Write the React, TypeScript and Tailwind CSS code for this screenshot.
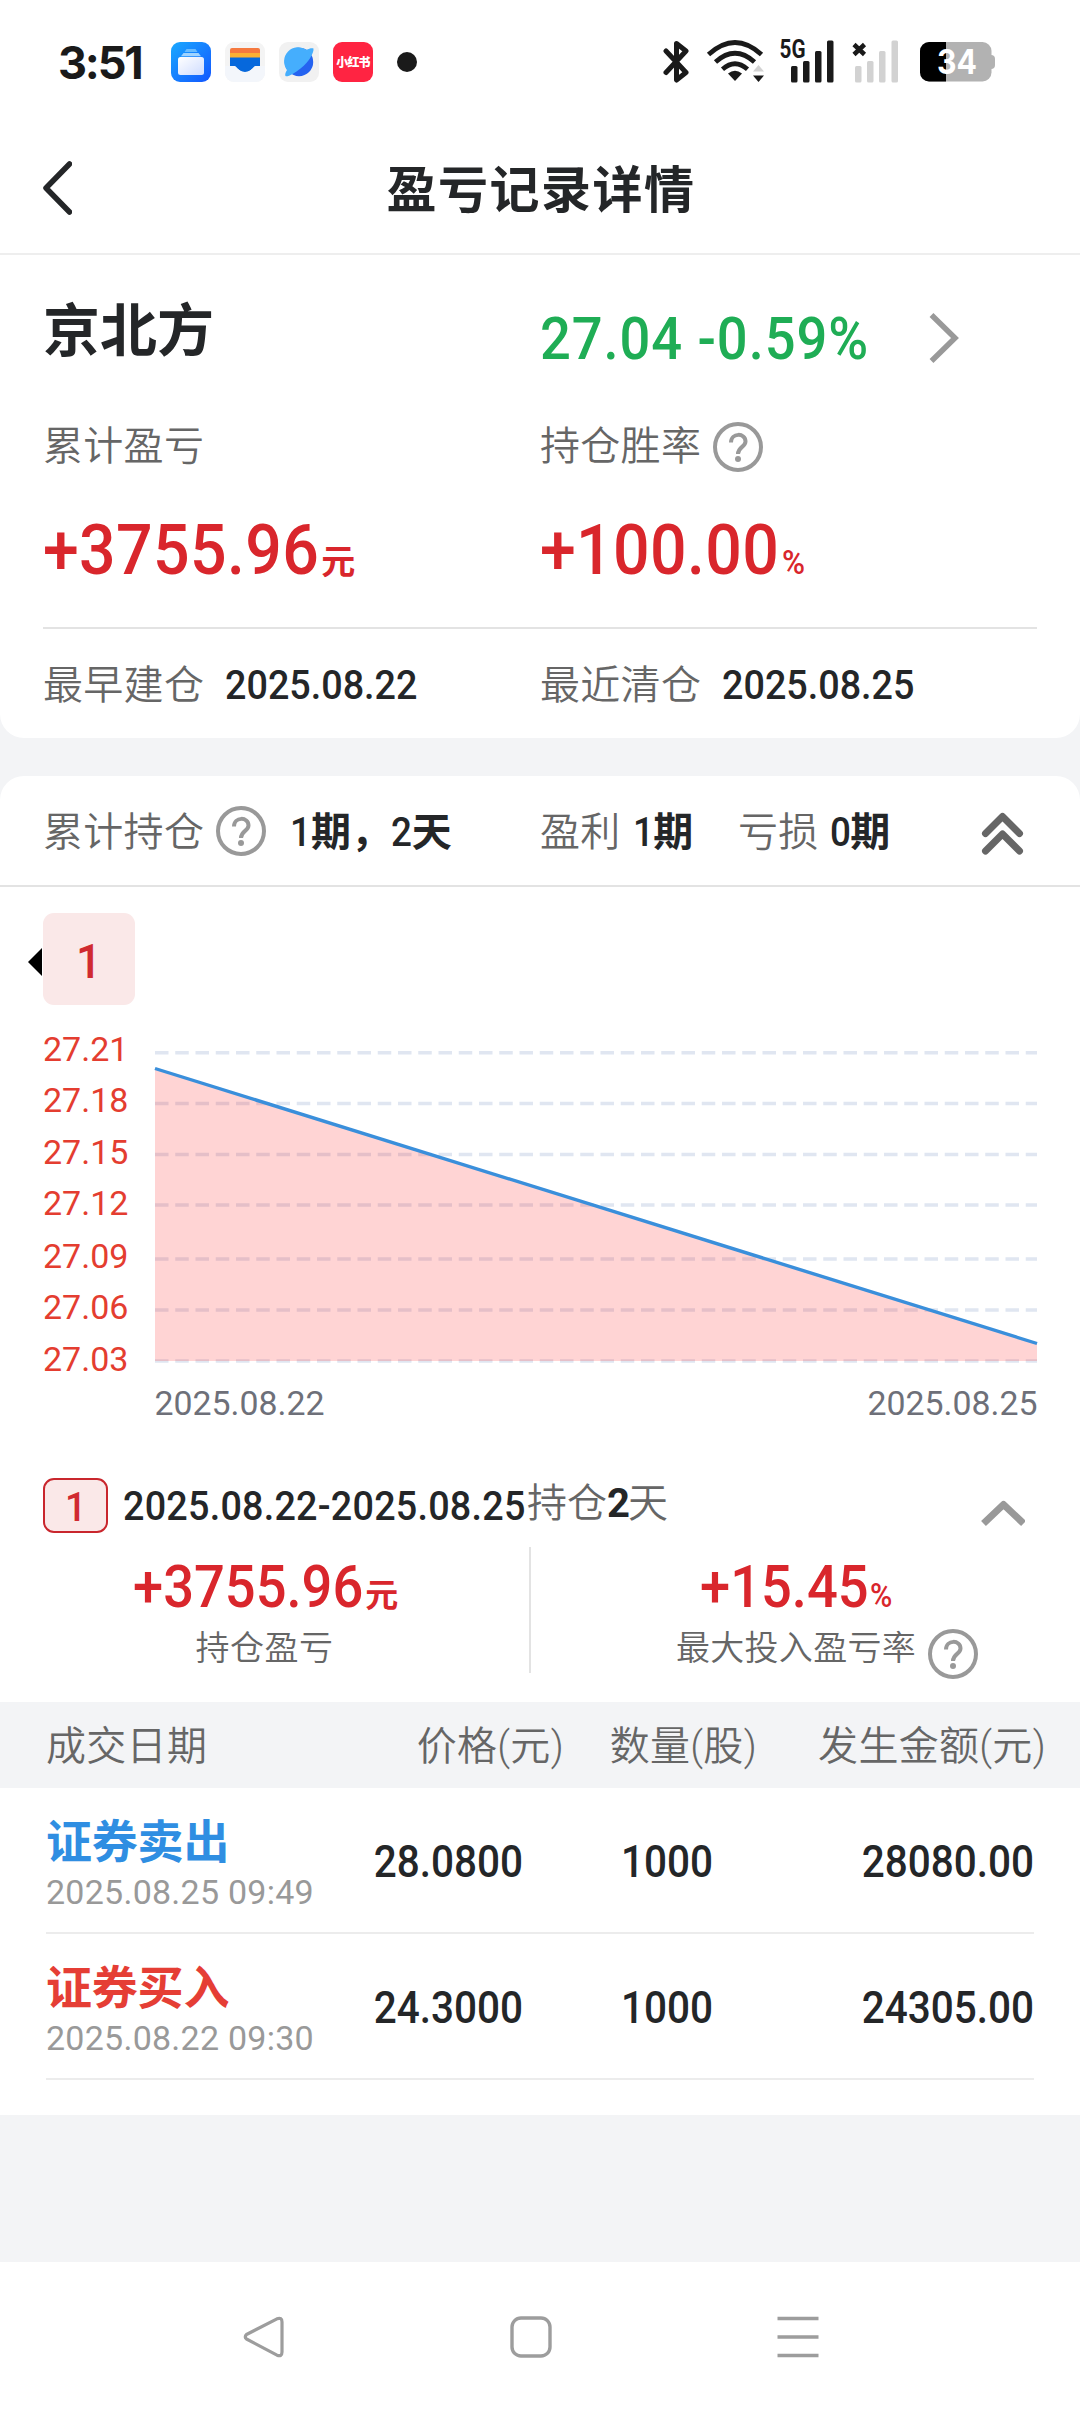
import type { ReactNode } from "react";

const prices = [
  { label: "27.21", labelY: 1061, y: 1052.7 },
  { label: "27.18", labelY: 1112, y: 1103.5 },
  { label: "27.15", labelY: 1164, y: 1154.5 },
  { label: "27.12", labelY: 1215, y: 1205 },
  { label: "27.09", labelY: 1268, y: 1259 },
  { label: "27.06", labelY: 1319, y: 1310 },
  { label: "27.03", labelY: 1371, y: 1361 },
];

const trades = [
  { name: "证券卖出", color: "text-[#2f8ee2]", time: "2025.08.25 09:49", price: "28.0800", count: "1000", amount: "28080.00" },
  { name: "证券买入", color: "text-[#e53e35]", time: "2025.08.22 09:30", price: "24.3000", count: "1000", amount: "24305.00" },
];

// slightly condensed figures, DIN style
function Num({ className = "origin-left", children }: { className?: string; children: ReactNode }) {
  return <span className={`inline-block scale-x-[0.92] font-medium leading-none whitespace-nowrap ${className}`}>{children}</span>;
}

function Label({ children }: { children: ReactNode }) {
  return <span className="text-[40px] tracking-[0.300px] leading-none text-[#666] font-[350] whitespace-nowrap">{children}</span>;
}

function HelpIcon({ className = "" }: { className?: string }) {
  return (
    <svg viewBox="0 0 50 50" className={`w-[50px] h-[50px] shrink-0 ${className}`} fill="none" stroke="#999" strokeWidth="4">
      <circle cx="25" cy="25" r="23" />
      <path d="M18 20.5C18 10.5 32.5 10.5 32.5 19.5C32.5 25 25 25 25 32" />
      <circle cx="25" cy="37" r="3" fill="#999" stroke="none" />
    </svg>
  );
}

function StatusBar() {
  return (
    <div className="h-[124px] flex items-center pl-[58px] pr-[85px]">
      <span className="font-['Inter'] font-bold text-[45px] tracking-[-2.200px] leading-none text-[#1a1a1a] w-[113px]">3:51</span>
      <div className="flex items-center gap-[14px]">
        <svg viewBox="0 0 40 40" className="w-[40px] h-[40px]">
          <defs>
            <linearGradient id="files" x1="0" y1="0" x2="1" y2="1">
              <stop offset="0" stopColor="#1aa9ff" />
              <stop offset="1" stopColor="#1256ff" />
            </linearGradient>
            <linearGradient id="card" x1="0" y1="0" x2="1" y2="1">
              <stop offset="0" stopColor="#fff" />
              <stop offset="1" stopColor="#cfdcff" />
            </linearGradient>
          </defs>
          <rect width="40" height="40" rx="9" fill="url(#files)" />
          <path d="M15.5 7H24.500L26.500 10H13.500Z" fill="#69bcff" />
          <path d="M12.500 11H27.500L30 14.200H10Z" fill="#9fd3ff" />
          <rect x="7" y="15" width="26" height="18" rx="2.500" fill="url(#card)" />
        </svg>
        <svg viewBox="0 0 40 40" className="w-[40px] h-[40px]">
          <rect width="40" height="40" rx="9" fill="#f4f4f4" />
          <path d="M5 12V8a2 2 0 0 1 2-2H33a2 2 0 0 1 2 2V12Z" fill="#f5793f" />
          <path d="M5 11H35V17H5Z" fill="#fbb034" />
          <path d="M5 15.500H35V24H31C28 24 27 30 20 30C13 30 12 24 9 24H5Z" fill="#0668dc" />
          <path d="M0 24H9C12 24 13 30 20 30C27 30 28 24 31 24H40V31a9 9 0 0 1-9 9H9a9 9 0 0 1-9-9Z" fill="#f3f6fb" />
        </svg>
        <svg viewBox="0 0 40 40" className="w-[40px] h-[40px]">
          <rect width="40" height="40" rx="9" fill="#f1f1f1" />
          <circle cx="20" cy="20" r="14.200" fill="#2563f0" />
          <path d="M34.500 6.500C35 11 30 20 21.500 26.500C15.500 31.500 8 35.500 6.500 34C5.700 33 6.500 30.500 8 28A14.200 14.200 0 0 1 27.500 7.800C30 6.500 33 5.700 34.500 6.500Z" fill="#45aefd" />
        </svg>
        <div className="w-[40px] h-[40px] rounded-[9px] bg-[#ff2442] flex items-center justify-center">
          <span className="font-['Noto_Sans_CJK_SC',sans-serif] font-black text-[12px] tracking-[-0.800px] leading-none text-white whitespace-nowrap">小红书</span>
        </div>
      </div>
      <div className="ml-[24px] w-[20px] h-[20px] rounded-full bg-[#1a1a1a]" />

      <svg viewBox="663 32 332 64" className="ml-auto w-[332px] h-[64px]">
        <path d="M666 53L686 74.500L676.500 82V45.500L686 53L666 74.500" fill="none" stroke="#1a1a1a" strokeWidth="5" strokeLinecap="round" strokeLinejoin="round" />
        <g fill="none" stroke="#1a1a1a" strokeWidth="4.800">
          <path d="M708.500 56.500Q735 32.500 761.500 56.500" />
          <path d="M715.500 64Q735 46.500 754.500 64" />
          <path d="M722.500 71.200Q735 60.500 747.500 71.200" />
        </g>
        <path d="M728 75.500Q735 70 742 75.500L735 83Z" fill="#1a1a1a" />
        <path d="M753 73.500L758.500 67L764 73.500Z" fill="#d2d2d2" />
        <path d="M753 77.500L758.500 84L764 77.500Z" fill="#1a1a1a" />
        <text x="779.500" y="60" fontSize="25" fontWeight="700" fill="#1a1a1a" textLength="26" lengthAdjust="spacingAndGlyphs" className="font-['Roboto']">5G</text>
        <g fill="#1a1a1a">
          <rect x="791" y="68" width="6.500" height="16.500" rx="1.500" />
          <rect x="803" y="63" width="6.500" height="21.500" rx="1.500" />
          <rect x="815" y="53" width="6.500" height="31.500" rx="1.500" />
          <rect x="827" y="42.500" width="6.500" height="42" rx="1.500" />
        </g>
        <path d="M854 46.500L864.500 56.500M864.500 46.500L854 56.500" stroke="#1a1a1a" strokeWidth="4.500" />
        <g fill="#d2d2d2">
          <rect x="855" y="68" width="6.500" height="16.500" rx="1.500" />
          <rect x="867" y="63" width="6.500" height="21.500" rx="1.500" />
          <rect x="879" y="53" width="6.500" height="31.500" rx="1.500" />
          <rect x="891.500" y="42.500" width="6.500" height="42" rx="1.500" />
        </g>
        <rect x="984" y="57" width="11" height="14" rx="4" fill="#b2b2b2" />
        <rect x="920" y="44" width="71.500" height="39.500" rx="9" fill="#b2b2b2" />
        <path d="M946 44V83.500H929a9 9 0 0 1-9-9V53a9 9 0 0 1 9-9Z" fill="#000" />
        <text x="957" y="76" textAnchor="middle" fontSize="34" fontWeight="700" fill="#fff" textLength="40" lengthAdjust="spacingAndGlyphs" className="font-['Inter']">34</text>
      </svg>
    </div>
  );
}

function Header() {
  return (
    <div className="h-[131px] border-b-2 border-[#eee] grid grid-cols-[72px_1fr_72px] items-center">
      <svg viewBox="0 0 72 60" className="w-[72px] h-[60px]" fill="none" stroke="#242628" strokeWidth="5.500" strokeLinecap="round" strokeLinejoin="round">
        <path d="M69.500 5L46 29L69.500 53" />
      </svg>
      <h1 className="text-center font-bold text-[50px] tracking-[1.500px] leading-none text-[#242628] pt-[4px] pl-[2px]">盈亏记录详情</h1>
    </div>
  );
}

function Summary() {
  return (
    <section className="bg-white rounded-b-[24px] h-[483px] pt-[5px] px-[43px]">
      <div className="grid grid-cols-2">
        <div className="h-[140px] pt-[3px] flex items-center">
          <h2 className="font-bold text-[57px] leading-none text-[#242628]">京北方</h2>
        </div>
        <div className="h-[140px] pt-[16px] flex items-center">
          <div className="w-[388px]">
            <Num className="origin-left text-[59px] tracking-[1px] text-[#1fad55]">27.04 -0.59%</Num>
          </div>
          <svg viewBox="0 0 32 52" className="w-[32px] h-[52px]" fill="none" stroke="#999" strokeWidth="5.500">
            <path d="M3.500 3L27 26L3.500 49" />
          </svg>
        </div>
        <div className="h-[90px] pt-[3px] flex items-center">
          <Label>累计盈亏</Label>
        </div>
        <div className="h-[90px] pt-[3px] flex items-center">
          <Label>持仓胜率</Label>
          <HelpIcon className="ml-[12px]" />
        </div>
        <div className="h-[118px] pt-[2px] flex items-center text-[#d9262c]">
          <p className="text-[70px] leading-none whitespace-nowrap">
            <Num className="origin-left tracking-[0.400px] mr-[-22px]">+3755.96</Num>
            <span className="font-bold text-[34px]">元</span>
          </p>
        </div>
        <div className="h-[118px] pt-[2px] flex items-center text-[#d9262c]">
          <p className="text-[70px] leading-none whitespace-nowrap">
            <Num className="origin-left tracking-[0.400px] mr-[-18px]">+100.00</Num>
            <Num className="origin-left text-[34px]">%</Num>
          </p>
        </div>
      </div>
      <div className="mt-[19px] border-t-2 border-[#e3e3e3] grid grid-cols-2">
        <div className="h-[109px] pt-[4px] flex items-center gap-[21px]">
          <Label>最早建仓</Label>
          <Num className="origin-left text-[41px] text-[#242628]">2025.08.22</Num>
        </div>
        <div className="h-[109px] pt-[4px] flex items-center gap-[21px]">
          <Label>最近清仓</Label>
          <Num className="origin-left text-[41px] text-[#242628]">2025.08.25</Num>
        </div>
      </div>
    </section>
  );
}

function HoldingBar() {
  return (
    <div className="h-[111px] pl-[43px] pt-[4px] border-b-2 border-[#e3e3e3] flex items-center text-[40px] leading-none text-[#242628] whitespace-nowrap">
      <div className="w-[497px] flex items-center">
        <Label>累计持仓</Label>
        <HelpIcon className="ml-[12px] mb-[4px]" />
        <span className="ml-[24px] font-bold">
          <Num className="origin-left mr-[-2px]">1</Num>期，<Num className="origin-left mr-[-2px]">2</Num>天
        </span>
      </div>
      <div className="w-[198px] flex items-center gap-[12px]">
        <Label>盈利</Label>
        <span className="font-bold"><Num className="origin-left mr-[-2px]">1</Num>期</span>
      </div>
      <div className="w-[242px] flex items-center gap-[11px]">
        <Label>亏损</Label>
        <span className="font-bold"><Num className="origin-left mr-[-2px]">0</Num>期</span>
      </div>
      <svg viewBox="0 0 44 44" className="w-[44px] h-[44px]" fill="none" stroke="#666" strokeWidth="7" strokeLinecap="round" strokeLinejoin="round">
        <path d="M5.500 22.500L22.500 5.500L39.500 22.500M5.500 40L22.500 23L39.500 40" />
      </svg>
    </div>
  );
}

function Chart() {
  return (
    <svg viewBox="0 1005 1080 459" className="block w-[1080px] h-[459px]">
      {prices.map((p) => (
        <g key={p.label}>
          <text x="43" y={p.labelY} fontSize="34" fill="#e43d30">{p.label}</text>
          <path d={`M155 ${p.y}H1037`} stroke="#e0e6f1" strokeWidth="3.400" strokeDasharray="13.500 6.750" />
        </g>
      ))}
      <path d="M155 1068.500L1037 1343.500V1361H155Z" fill="#ff0000" fillOpacity="0.170" />
      <path d="M155 1068.500L1037 1343.500" stroke="#3a8fdb" strokeWidth="3.400" />
      <text x="154.500" y="1415" fontSize="34" fill="#6e7079" textLength="170" lengthAdjust="spacingAndGlyphs">2025.08.22</text>
      <text x="867.500" y="1415" fontSize="34" fill="#6e7079" textLength="170" lengthAdjust="spacingAndGlyphs">2025.08.25</text>
    </svg>
  );
}

function Period() {
  return (
    <>
      <div className="h-[83px] pl-[43px] flex items-center leading-none whitespace-nowrap">
        <div className="w-[65px] h-[55px] rounded-[11px] border-2 border-[#c9262d] bg-[#fae8e8] flex items-center justify-center pt-[3px]">
          <Num className="origin-center text-[41px] text-[#d02a30]">1</Num>
        </div>
        <div className="ml-[15px] w-[404px] pt-[2px]">
          <Num className="origin-left text-[41px] tracking-[0.250px] text-[#242628]">2025.08.22-2025.08.25</Num>
        </div>
        <span className="w-[454px] text-[40px] font-[350] text-[#666] mb-[3px]">
          持仓<span className="font-bold text-[#242628] tracking-[-2px]">2</span>天
        </span>
        <svg viewBox="0 0 44 28" className="w-[44px] h-[28px] mt-[14px]" fill="none" stroke="#999" strokeWidth="7" strokeLinejoin="round">
          <path d="M2.500 24.500L22.500 5.500L42.500 24.500" />
        </svg>
      </div>
      <div className="h-[155px] flex">
        <div className="w-[529px] flex flex-col items-center text-[#d9262c]">
          <p className="h-[78px] flex items-baseline pt-[10px] pl-[2px] text-[59px]">
            <Num className="origin-left mr-[-18px]">+3755.96</Num>
            <span className="font-bold text-[33px] leading-none">元</span>
          </p>
          <span className="h-[44px] text-[34px] leading-[46px] tracking-[0.500px] font-[350] text-[#666]">持仓盈亏</span>
        </div>
        <div className="w-[2px] h-[126px] bg-[#e3e3e3]" />
        <div className="w-[549px] flex flex-col items-center text-[#d9262c]">
          <p className="h-[78px] flex items-baseline pt-[10px] pr-[16px] text-[59px]">
            <Num className="origin-left mr-[-13px]">+15.45</Num>
            <Num className="origin-left text-[33px]">%</Num>
          </p>
          <div className="h-[44px] flex items-center pl-[43px]">
            <span className="text-[34px] leading-none tracking-[0.300px] font-[350] text-[#666] pt-[2px]">最大投入盈亏率</span>
            <HelpIcon className="ml-[12px] mt-[14px]" />
          </div>
        </div>
      </div>
    </>
  );
}

function Trades() {
  return (
    <div className="pb-[35px]">
      <div className="h-[86px] bg-[#f3f4f6] grid grid-cols-[316px_202px_193px_289px] pl-[46px] pt-[3px] items-center text-right">
        <span className="text-left"><Label>成交日期</Label></span>
        <Label>价格(元)</Label>
        <Label>数量(股)</Label>
        <Label>发生金额(元)</Label>
      </div>
      {trades.map((t) => (
        <div key={t.time} className="mx-[46px] h-[146px] pt-[4px] border-b-2 border-[#ececec] grid grid-cols-[276px_201px_190px_321px] items-center text-right text-[44px] leading-none text-[#242628]">
          <div className="text-left whitespace-nowrap pt-[3px]">
            <div className={`${t.color} font-bold text-[46px] tracking-[-0.200px] h-[54px] leading-[54px]`}>{t.name}</div>
            <div className="text-[34px] tracking-[0.250px] text-[#999] h-[44px] leading-[46px]">{t.time}</div>
          </div>
          <Num className="origin-right">{t.price}</Num>
          <Num className="origin-right">{t.count}</Num>
          <Num className="origin-right">{t.amount}</Num>
        </div>
      ))}
    </div>
  );
}

function NavBar() {
  return (
    <nav className="h-[150px] bg-white flex items-center justify-between pl-[243px] pr-[261px]">
      <svg viewBox="0 0 42 42" className="w-[42px] h-[42px]" fill="none" stroke="#9d9d9d" strokeWidth="3.200" strokeLinejoin="round">
        <path d="M3.500 18.500L34 2.800Q39 1 39 6V36Q39 41 34 39.200L3.500 23Q1 21 3.500 18.500Z" />
      </svg>
      <svg viewBox="0 0 42 42" className="w-[42px] h-[42px]" fill="none" stroke="#9d9d9d" strokeWidth="3.400">
        <rect x="2" y="2" width="38" height="38" rx="9" />
      </svg>
      <svg viewBox="0 0 42 42" className="w-[42px] h-[42px]" stroke="#9d9d9d" strokeWidth="3.400">
        <path d="M0.500 2.500H41.500M0.500 21H41.500M0.500 39.500H41.500" />
      </svg>
    </nav>
  );
}

export default function App() {
  return (
    <div className="w-[1080px] h-[2412px] overflow-hidden bg-[#f3f4f6] font-['Roboto','Noto_Sans_CJK_SC',sans-serif]">
      <div className="bg-white">
        <StatusBar />
        <Header />
      </div>
      <Summary />
      <section className="mt-[38px] mb-[147px] bg-white rounded-t-[24px]">
        <HoldingBar />
        <div className="pt-[26px] pl-[28px] flex items-center">
          <svg viewBox="0 0 15 30" className="w-[15px] h-[30px] mt-[6px]">
            <path d="M14 1V29L0 15Z" fill="#000" />
          </svg>
          <div className="w-[92px] h-[92px] rounded-[11px] bg-[#fae8e8] flex items-center justify-center pt-[5px]">
            <Num className="origin-center text-[49px] text-[#d02a30]">1</Num>
          </div>
        </div>
        <Chart />
        <Period />
        <Trades />
      </section>
      <NavBar />
    </div>
  );
}
